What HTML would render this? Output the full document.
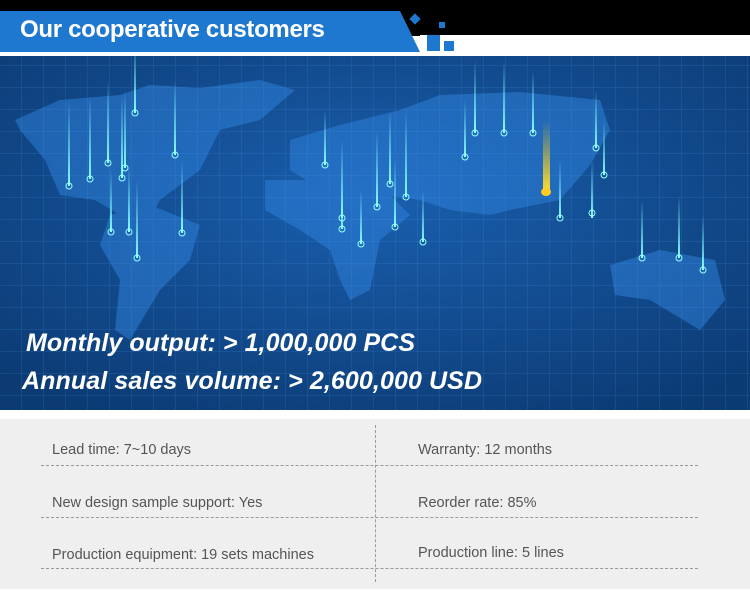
<!DOCTYPE html>
<html><head><meta charset="utf-8"><style>
*{margin:0;padding:0;box-sizing:border-box}
body{width:750px;height:600px;background:#fff;position:relative;overflow:hidden;font-family:"Liberation Sans",sans-serif}
.top{position:absolute;left:0;top:0;width:750px;height:36px;background:#000}
.band{position:absolute;left:0;top:11px;width:420px;height:41px;background:#1e78d0;clip-path:polygon(0 0,400px 0,420px 41px,0 41px)}
.band span{position:absolute;left:20px;top:5px;color:#fff;font-size:24px;font-weight:bold;letter-spacing:-0.3px}
.whitestrip{position:absolute;left:420px;top:35px;width:330px;height:17px;background:#fff}
.sq{position:absolute;background:#1e78d0}
.map{position:absolute;left:0;top:56px;width:750px;height:354px}
.stats{position:absolute;left:0;top:419px;width:750px;height:170px;background:#efefef}
.t{position:absolute;font-size:14.5px;color:#555}
.hl{position:absolute;left:41px;width:657px;border-top:1px dashed #999}
.vl{position:absolute;left:375px;top:6px;height:157px;border-left:1px dashed #999}
</style></head><body>
<div class="top"></div>
<div class="whitestrip"></div>
<div class="band"><span>Our cooperative customers</span></div>
<div class="sq" style="left:411px;top:15px;width:8px;height:8px;transform:rotate(45deg)"></div>
<div class="sq" style="left:439px;top:22px;width:6px;height:6px"></div>
<div class="sq" style="left:427px;top:35px;width:13px;height:16px"></div>
<div class="sq" style="left:444px;top:41px;width:10px;height:10px"></div>
<svg class="map" viewBox="0 56 750 354" width="750" height="354">
<defs>
<radialGradient id="bg" cx="50%" cy="40%" r="70%"><stop offset="0" stop-color="#1a5fae"/><stop offset="1" stop-color="#0c3b74"/></radialGradient>
<pattern id="grid" width="22" height="22" patternUnits="userSpaceOnUse"><path d="M22 0V22H0" fill="none" stroke="#4a9cf0" stroke-width="1" opacity=".3"/></pattern>
<linearGradient id="pin" x1="0" y1="0" x2="0" y2="1"><stop offset="0" stop-color="#7ff" stop-opacity="0"/><stop offset="1" stop-color="#8ff"/></linearGradient>
<linearGradient id="gold" x1="0" y1="0" x2="0" y2="1"><stop offset="0" stop-color="#fc0" stop-opacity="0"/><stop offset="1" stop-color="#fd3"/></linearGradient>
</defs>
<rect x="0" y="56" width="750" height="354" fill="url(#bg)"/>
<g fill="#2f83de" opacity=".5">
<path d="M15 120 L60 100 L120 95 L150 85 L200 88 L260 80 L295 90 L260 120 L220 130 L200 170 L160 200 L150 220 L120 215 L95 200 L60 195 L45 160 L20 130Z"/>
<path d="M110 215 L150 205 L200 225 L190 260 L160 290 L130 340 L115 330 L120 280 L100 245Z"/>
<path d="M290 140 L340 125 L400 110 L440 95 L520 92 L600 100 L610 130 L590 165 L560 200 L510 210 L490 215 L450 210 L420 200 L385 195 L330 195 L290 170Z"/>
<path d="M265 180 L330 180 L390 195 L410 215 L380 240 L370 290 L350 300 L340 280 L330 250 L300 230 L265 210Z"/>
<path d="M610 265 L660 250 L715 260 L725 300 L700 330 L650 300 L615 295Z"/>
</g>
<rect x="0" y="56" width="750" height="354" fill="url(#grid)"/>
<g>
<rect x="68" y="100" width="2" height="86" fill="url(#pin)"/><circle cx="69" cy="186" r="3" fill="none" stroke="#9ff"/>
<rect x="89" y="95" width="2" height="84" fill="url(#pin)"/><circle cx="90" cy="179" r="3" fill="none" stroke="#9ff"/>
<rect x="107" y="80" width="2" height="83" fill="url(#pin)"/><circle cx="108" cy="163" r="3" fill="none" stroke="#9ff"/>
<rect x="121" y="95" width="2" height="83" fill="url(#pin)"/><circle cx="122" cy="178" r="3" fill="none" stroke="#9ff"/>
<rect x="124" y="90" width="2" height="78" fill="url(#pin)"/><circle cx="125" cy="168" r="3" fill="none" stroke="#9ff"/>
<rect x="134" y="40" width="2" height="73" fill="url(#pin)"/><circle cx="135" cy="113" r="3" fill="none" stroke="#9ff"/>
<rect x="174" y="80" width="2" height="75" fill="url(#pin)"/><circle cx="175" cy="155" r="3" fill="none" stroke="#9ff"/>
<rect x="110" y="170" width="2" height="62" fill="url(#pin)"/><circle cx="111" cy="232" r="3" fill="none" stroke="#9ff"/>
<rect x="128" y="165" width="2" height="67" fill="url(#pin)"/><circle cx="129" cy="232" r="3" fill="none" stroke="#9ff"/>
<rect x="136" y="180" width="2" height="78" fill="url(#pin)"/><circle cx="137" cy="258" r="3" fill="none" stroke="#9ff"/>
<rect x="181" y="160" width="2" height="73" fill="url(#pin)"/><circle cx="182" cy="233" r="3" fill="none" stroke="#9ff"/>
<rect x="324" y="110" width="2" height="55" fill="url(#pin)"/><circle cx="325" cy="165" r="3" fill="none" stroke="#9ff"/>
<rect x="341" y="140" width="2" height="78" fill="url(#pin)"/><circle cx="342" cy="218" r="3" fill="none" stroke="#9ff"/>
<rect x="341" y="200" width="2" height="29" fill="url(#pin)"/><circle cx="342" cy="229" r="3" fill="none" stroke="#9ff"/>
<rect x="360" y="190" width="2" height="54" fill="url(#pin)"/><circle cx="361" cy="244" r="3" fill="none" stroke="#9ff"/>
<rect x="376" y="130" width="2" height="77" fill="url(#pin)"/><circle cx="377" cy="207" r="3" fill="none" stroke="#9ff"/>
<rect x="389" y="110" width="2" height="74" fill="url(#pin)"/><circle cx="390" cy="184" r="3" fill="none" stroke="#9ff"/>
<rect x="394" y="160" width="2" height="67" fill="url(#pin)"/><circle cx="395" cy="227" r="3" fill="none" stroke="#9ff"/>
<rect x="405" y="110" width="2" height="87" fill="url(#pin)"/><circle cx="406" cy="197" r="3" fill="none" stroke="#9ff"/>
<rect x="422" y="190" width="2" height="52" fill="url(#pin)"/><circle cx="423" cy="242" r="3" fill="none" stroke="#9ff"/>
<rect x="464" y="100" width="2" height="57" fill="url(#pin)"/><circle cx="465" cy="157" r="3" fill="none" stroke="#9ff"/>
<rect x="474" y="60" width="2" height="73" fill="url(#pin)"/><circle cx="475" cy="133" r="3" fill="none" stroke="#9ff"/>
<rect x="503" y="60" width="2" height="73" fill="url(#pin)"/><circle cx="504" cy="133" r="3" fill="none" stroke="#9ff"/>
<rect x="532" y="70" width="2" height="63" fill="url(#pin)"/><circle cx="533" cy="133" r="3" fill="none" stroke="#9ff"/>
<rect x="543" y="120" width="7" height="72" rx="3" fill="url(#gold)"/><ellipse cx="546" cy="192" rx="5" ry="4" fill="#fc2"/>
<rect x="559" y="160" width="2" height="58" fill="url(#pin)"/><circle cx="560" cy="218" r="3" fill="none" stroke="#9ff"/>
<rect x="591" y="160" width="2" height="58" fill="url(#pin)"/><circle cx="592" cy="213" r="3" fill="none" stroke="#9ff"/>
<rect x="595" y="90" width="2" height="58" fill="url(#pin)"/><circle cx="596" cy="148" r="3" fill="none" stroke="#9ff"/>
<rect x="603" y="120" width="2" height="55" fill="url(#pin)"/><circle cx="604" cy="175" r="3" fill="none" stroke="#9ff"/>
<rect x="641" y="200" width="2" height="58" fill="url(#pin)"/><circle cx="642" cy="258" r="3" fill="none" stroke="#9ff"/>
<rect x="678" y="195" width="2" height="63" fill="url(#pin)"/><circle cx="679" cy="258" r="3" fill="none" stroke="#9ff"/>
<rect x="702" y="215" width="2" height="55" fill="url(#pin)"/><circle cx="703" cy="270" r="3" fill="none" stroke="#9ff"/>
</g>
<g fill="#fff" font-family="Liberation Sans,sans-serif" font-style="italic" font-weight="bold" font-size="25">
<text x="26" y="351" textLength="389" lengthAdjust="spacing">Monthly output: &gt; 1,000,000 PCS</text>
<text x="22" y="389" textLength="460" lengthAdjust="spacing">Annual sales volume:  &gt; 2,600,000 USD</text>
</g>
</svg>
<div class="stats">
<div class="vl"></div>
<div class="t" style="left:52px;top:23px">Lead time: 7~10 days</div>
<div class="t" style="left:418px;top:23px">Warranty: 12 months</div>
<div class="hl" style="top:46px"></div>
<div class="t" style="left:52px;top:76px">New design sample support: Yes</div>
<div class="t" style="left:418px;top:76px">Reorder rate: 85%</div>
<div class="hl" style="top:98px"></div>
<div class="t" style="left:52px;top:128px">Production equipment: 19 sets machines</div>
<div class="t" style="left:418px;top:126px">Production line: 5 lines</div>
<div class="hl" style="top:149px"></div>
</div>
</body></html>
